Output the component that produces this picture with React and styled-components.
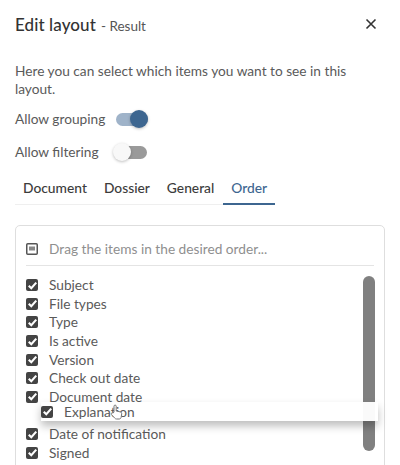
import styled, { createGlobalStyle } from 'styled-components';

const GlobalStyle = createGlobalStyle`
  html, body {
    margin: 0;
    padding: 0;
    background: #fff;
    overflow: hidden;
  }
  body {
    font-family: Lato, "Noto Sans", sans-serif;
    color: #4a4a4a;
  }
`

const Dialog = styled.div`
  width: 400px;
  height: 465px;
  box-sizing: border-box;
  padding: 12px 15px 0;
  overflow: hidden;
`

const Header = styled.div`
  display: flex;
  align-items: center;
  justify-content: space-between;
  height: 24px;
`

const TitleGroup = styled.div`
  display: flex;
  align-items: baseline;
  gap: 5px;
`

const Title = styled.h1`
  margin: 0;
  font-size: 17px;
  font-weight: 500;
  color: #333;
  letter-spacing: 0.1px;
`

const Subtitle = styled.span`
  font-size: 13.5px;
  color: #555;
`

const Close = styled.button`
  display: flex;
  width: 14px;
  height: 14px;
  margin-right: 7px;
  padding: 0;
  border: 0;
  background: none;
  color: #333;
`

const Intro = styled.p`
  margin: 26px 0 0;
  font-size: 13.7px;
  line-height: 18px;
  color: #5a5a5a;
`

const SwitchRow = styled.div`
  display: flex;
  align-items: center;
  gap: ${(p) => p.$gap}px;
  height: 20px;
  margin-top: ${(p) => p.$top}px;
  font-size: 13.7px;
  line-height: 16px;
  color: #5a5a5a;
`

const Track = styled.div`
  position: relative;
  width: 32px;
  height: 13px;
  border-radius: 7px;
  background: ${(p) => (p.$on ? '#9fb3c9' : '#9a9a9a')};
`

const Thumb = styled.div`
  position: absolute;
  top: -2.5px;
  left: ${(p) => (p.$on ? '14px' : '-2px')};
  width: 18px;
  height: 18px;
  border-radius: 50%;
  background: ${(p) => (p.$on ? '#3d6690' : '#f8f8f8')};
  box-shadow: 0 1px 3px rgba(0, 0, 0, 0.25);
`

const Tabs = styled.div`
  display: flex;
  height: 32px;
  margin-top: 10px;
  padding-left: 8px;
  border-bottom: 1px solid #efefef;
  width: 251px;
`

const Tab = styled.div`
  display: flex;
  align-items: center;
  justify-content: center;
  box-sizing: border-box;
  height: 33px;
  margin-right: ${(p) => p.$gap}px;
  padding: ${(p) => (p.$active ? '0 8px' : '0')};
  margin-left: ${(p) => (p.$active ? '-8px' : '0')};
  font-size: 13.8px;
  font-weight: 500;
  color: ${(p) => (p.$active ? '#3d6690' : '#3c3c3c')};
  border-bottom: 2px solid ${(p) => (p.$active ? '#3d6690' : 'transparent')};
`

const Card = styled.div`
  position: relative;
  margin-top: 20px;
  height: 260px;
  box-sizing: border-box;
  padding: 0 10px;
  border: 1px solid #dedede;
  border-radius: 5px;
`

const CardHeader = styled.div`
  display: flex;
  align-items: center;
  gap: 11px;
  box-sizing: content-box;
  height: 33px;
  padding-top: 6px;
  border-bottom: 1px solid #e4e4e4;
  font-size: 13.7px;
  color: #8f8f8f;
`

const List = styled.div`
  display: flex;
  flex-direction: column;
  padding-top: 10px;
`

const Row = styled.div`
  display: flex;
  align-items: center;
  gap: 11px;
  height: 18.6px;
  font-size: 13.7px;
  line-height: 14px;
  color: #5a5a5a;
`

const Placeholder = styled.div`
  height: 18.6px;
`

const Box = styled.span`
  display: flex;
  align-items: center;
  justify-content: center;
  flex: none;
  width: 12px;
  height: 12px;
  border-radius: 2px;
  background: #444;
  color: #fff;
`

const Scrollbar = styled.div`
  position: absolute;
  top: 50px;
  right: 9px;
  width: 12px;
  height: 175px;
  border-radius: 6px;
  background: #808080;
`

const DragItem = styled.div`
  position: absolute;
  top: 176px;
  left: 25px;
  width: 337px;
  height: 19px;
  display: flex;
  align-items: center;
  gap: 11px;
  background: rgba(255, 255, 255, 0.96);
  font-size: 13.7px;
  line-height: 14px;
  color: #5a5a5a;
  box-shadow: 0 5px 9px rgba(0, 0, 0, 0.26);
`

const Cursor = styled.svg`
  position: absolute;
  top: 2px;
  left: 69px;
  width: 13px;
  height: 16px;
`

const items = ['Subject', 'File types', 'Type', 'Is active', 'Version', 'Check out date', 'Document date']
const lowerItems = ['Date of notification', 'Signed']

function CheckBox() {
  return (
    <Box>
      <svg width="11" height="11" viewBox="0 0 10 10" fill="none">
        <path d="M1.6 5.2 3.9 7.5 8.4 2.4" stroke="currentColor" strokeWidth="1.9" />
      </svg>
    </Box>
  )
}

export default function App() {
  return (
    <>
      <GlobalStyle />
      <Dialog>
        <Header>
          <TitleGroup>
            <Title>Edit layout</Title>
            <Subtitle>- Result</Subtitle>
          </TitleGroup>
          <Close>
            <svg width="14" height="14" viewBox="0 0 14 14" fill="none">
              <path d="M2.5 2.5 11.5 11.5M11.5 2.5 2.5 11.5" stroke="currentColor" strokeWidth="1.6" />
            </svg>
          </Close>
        </Header>

        <Intro>Here you can select which items you want to see in this layout.</Intro>

        <SwitchRow $top={11} $gap={11}>
          Allow grouping
          <Track $on><Thumb $on /></Track>
        </SwitchRow>
        <SwitchRow $top={13} $gap={16}>
          Allow filtering
          <Track><Thumb /></Track>
        </SwitchRow>

        <Tabs>
          <Tab $gap={17}>Document</Tab>
          <Tab $gap={17}>Dossier</Tab>
          <Tab $gap={17}>General</Tab>
          <Tab $active>Order</Tab>
        </Tabs>

        <Card>
          <CardHeader>
            <svg width="12" height="12" viewBox="0 0 12 12" fill="none">
              <rect x="0.75" y="0.75" width="10.5" height="10.5" rx="1" stroke="#555" strokeWidth="1.5" />
              <rect x="3" y="3.5" width="6" height="4" fill="#888" />
            </svg>
            Drag the items in the desired order...
          </CardHeader>
          <List>
            {items.map((item) => (
              <Row key={item}><CheckBox />{item}</Row>
            ))}
            <Placeholder />
            {lowerItems.map((item) => (
              <Row key={item}><CheckBox />{item}</Row>
            ))}
          </List>
          <Scrollbar />
          <DragItem>
            <CheckBox />
            Explanation
            <Cursor viewBox="0 0 13 16" fill="#fff" stroke="#777" strokeWidth="1">
              <path d="M4 8V2.2a1.1 1.1 0 0 1 2.2 0V7l4 .9c1 .3 1.6 1 1.5 2l-.5 3.2c-.1 1-.9 1.9-2 1.9H6.5c-.8 0-1.4-.4-1.9-1L1.4 10.6c-.8-1.2.7-2.4 1.7-1.5z" />
            </Cursor>
          </DragItem>
        </Card>
      </Dialog>
    </>
  );
}
